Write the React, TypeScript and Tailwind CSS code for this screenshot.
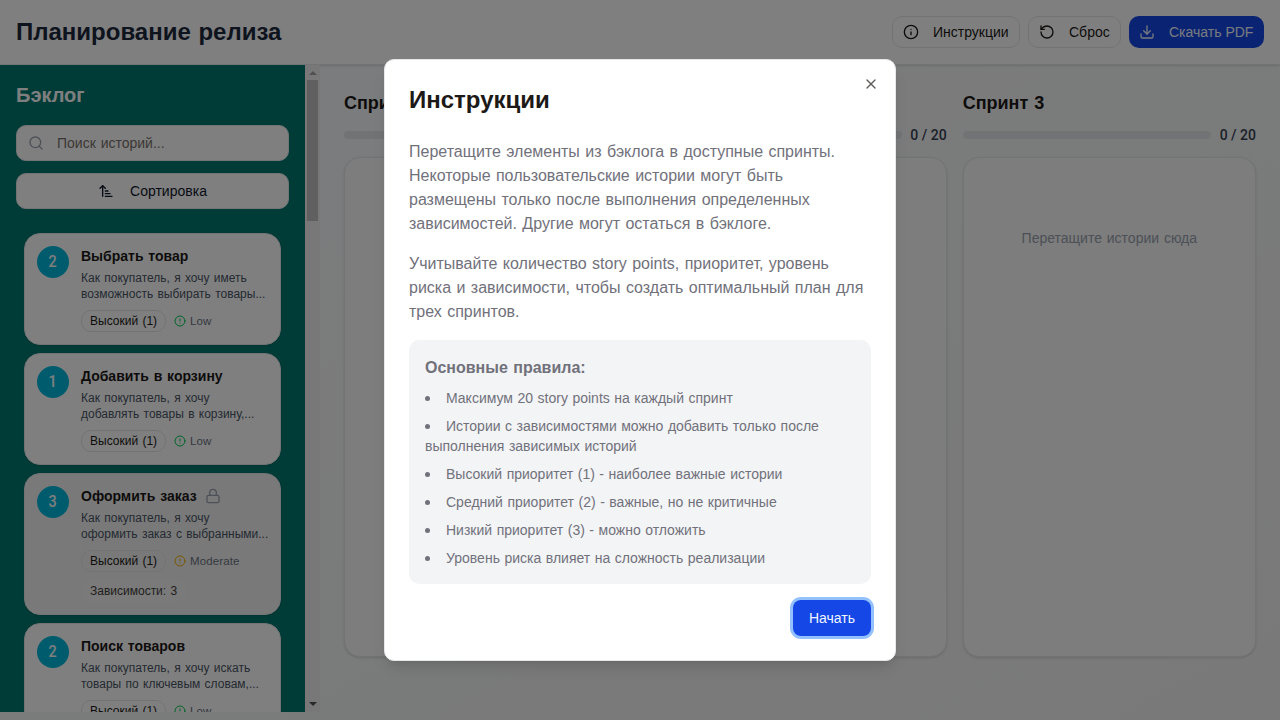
import React from "react";
import { ArrowUpNarrowWide, CircleAlert, Download, Info, Lock, RotateCcw, Search, X } from "lucide-react";

type Story = {
  points: number;
  title: string;
  lines: [string, string];
  risk: "Low" | "Moderate";
  dependency?: number;
};

const stories: Story[] = [
  { points: 2, title: "Выбрать товар", lines: ["Как покупатель, я хочу иметь", "возможность выбирать товары..."], risk: "Low" },
  { points: 1, title: "Добавить в корзину", lines: ["Как покупатель, я хочу", "добавлять товары в корзину,..."], risk: "Low" },
  { points: 3, title: "Оформить заказ", lines: ["Как покупатель, я хочу", "оформить заказ с выбранными..."], risk: "Moderate", dependency: 3 },
  { points: 2, title: "Поиск товаров", lines: ["Как покупатель, я хочу искать", "товары по ключевым словам,..."], risk: "Low" },
];

const rules = [
  "Максимум 20 story points на каждый спринт",
  "Истории с зависимостями можно добавить только после выполнения зависимых историй",
  "Высокий приоритет (1) - наиболее важные истории",
  "Средний приоритет (2) - важные, но не критичные",
  "Низкий приоритет (3) - можно отложить",
  "Уровень риска влияет на сложность реализации",
];

function StoryCard({ story }: { story: Story }) {
  const locked = story.dependency !== undefined;
  return (
    <article className={`flex shrink-0 gap-3 rounded-2xl border border-gray-200 p-3 shadow-sm ${locked ? "bg-[#f3f3f3]" : "bg-white"}`}>
      <div className="flex size-8 shrink-0 items-center justify-center rounded-full bg-[#00b8db] font-['Roboto',sans-serif] text-base font-medium text-white"><span className="inline-block scale-x-90">{story.points}</span></div>
      <div className="min-w-0 flex-1">
        <h3 className="flex h-5 items-center gap-2 text-sm leading-5 font-semibold whitespace-nowrap text-[#1c1917]">
          {story.title}
          {locked && <Lock className="size-4 text-gray-400" />}
        </h3>
        <p className="mt-1 text-xs leading-4 whitespace-nowrap text-[#4a5565]">
          {story.lines[0]}
          <br />
          {story.lines[1]}
        </p>
        <div className="mt-2 flex items-center gap-2 text-xs leading-4">
          <span className="rounded-[10px] border border-gray-200 px-2 py-0.5 text-[#1c1917]">Высокий (1)</span>
          <span className="flex items-center gap-1 text-[11.5px] tracking-[0.01em] text-[#6a7282]">
            <CircleAlert className={`size-3 ${story.risk === "Low" ? "text-green-500" : "text-[#f0b100]"}`} />
            {story.risk}
          </span>
        </div>
        {locked && <span className="mt-2 inline-block rounded-[10px] border border-transparent bg-[#f5f5f5] px-2 py-0.5 text-xs text-[#44403b]">Зависимости: {story.dependency}</span>}
      </div>
    </article>
  );
}

function Sprint({ number }: { number: number }) {
  return (
    <section className="min-w-0 flex-1">
      <h2 className="text-lg leading-7 font-semibold text-[#1c1917]">Спринт {number}</h2>
      <div className="mt-2 flex h-5 items-center gap-2">
        <div className="h-2 flex-1 rounded-full bg-[#e5e7eb]" />
        <span className="w-[37px] text-right font-['Roboto',sans-serif] text-sm font-medium whitespace-nowrap text-[#364153] [word-spacing:0]">0 / 20</span>
      </div>
      <div className={`mt-3 h-[500px] rounded-2xl border border-[#e5e7eb] pt-[70px] text-center text-sm text-[#99a1af] shadow-sm ${number === 3 ? "bg-[#f9faf9]" : "bg-[#f8fbf9]"}`}>Перетащите истории сюда</div>
    </section>
  );
}

export default function App() {
  return (
    <div className="relative h-[720px] w-[1280px] overflow-hidden bg-gradient-to-br from-[#f8fafc] to-[#f3f3f3] font-['Liberation_Sans',Arial,sans-serif] [word-spacing:0.06em]">
      <header className="flex h-[65px] items-center justify-between border-b border-gray-200 bg-white px-4 shadow-sm">
        <h1 className="text-2xl leading-8 font-bold text-[#1d293d]">Планирование релиза</h1>
        <div className="flex h-8 gap-2 text-sm text-[#1c1917]">
          <button className="flex w-32 items-center gap-[14px] rounded-[10px] border border-gray-200 px-2.5"><Info className="size-4" />Инструкции</button>
          <button className="flex w-[93px] items-center gap-[14px] rounded-[10px] border border-gray-200 px-2.5"><RotateCcw className="size-4" />Сброс</button>
          <button className="flex w-[135px] items-center gap-[14px] rounded-[10px] bg-[#1447e6] px-2.5 whitespace-nowrap text-blue-50"><Download className="size-4" />Скачать PDF</button>
        </div>
      </header>
      <div className="flex h-[647px]">
        <aside className="relative flex w-[305px] shrink-0 flex-col overflow-hidden bg-[#00786f] p-4">
          <h2 className="text-xl leading-7 font-semibold text-white">Бэклог</h2>
          <div className="mt-4 flex h-9 shrink-0 items-center gap-[13px] rounded-[10px] border border-gray-200 bg-white px-[11px] text-sm text-[#79716b]"><Search className="size-4 text-gray-400" />Поиск историй...</div>
          <button className="mt-3 flex h-9 shrink-0 items-center justify-center gap-4 rounded-[10px] border border-gray-200 bg-white text-sm text-[#0f172b]"><ArrowUpNarrowWide className="size-4" />Сортировка</button>
          <div className="mt-6 flex flex-col gap-2 px-2">{stories.map((story) => <StoryCard key={story.title} story={story} />)}</div>
        </aside>
        <div className="flex w-[15px] shrink-0 flex-col items-center justify-between bg-[#f1f1f1] py-[5px]">
          <div className="flex flex-col items-center gap-[5px]">
            <svg width="8" height="5" viewBox="0 0 8 5"><path d="M0 5L4 1L8 5Z" fill="#a3a3a3" /></svg>
            <div className="h-[141px] w-[11px] bg-[#c1c1c1]" />
          </div>
          <svg width="8" height="5" viewBox="0 0 8 5"><path d="M0 0L4 4L8 0Z" fill="#505050" /></svg>
        </div>
        <main className="flex flex-1 gap-4 p-6">{[1, 2, 3].map((n) => <Sprint key={n} number={n} />)}</main>
      </div>
      <div className="absolute inset-0 flex items-center justify-center bg-black/50">
        <div role="dialog" className="relative flex h-[602px] w-[512px] flex-col rounded-[10px] border border-gray-200 bg-white p-6 text-[#71717b] shadow-lg">
          <button aria-label="Закрыть" className="absolute top-4 right-4 opacity-70"><X className="size-4 text-[#1c1917]" /></button>
          <h2 className="text-2xl leading-8 font-bold text-[#1c1917]">Инструкции</h2>
          <p className="mt-6 text-base leading-6">Перетащите элементы из бэклога в доступные спринты.<br />Некоторые пользовательские истории могут быть<br />размещены только после выполнения определенных<br />зависимостей. Другие могут остаться в бэклоге.</p>
          <p className="mt-4 text-base leading-6">Учитывайте количество story points, приоритет, уровень<br />риска и зависимости, чтобы создать оптимальный план для<br />трех спринтов.</p>
          <div className="mt-4 rounded-[10px] bg-[#f3f4f6] p-4">
            <h4 className="mb-2 text-base leading-6 font-semibold">Основные правила:</h4>
            <ul className="list-inside list-disc space-y-2 text-sm leading-5 [word-spacing:0.045em] marker:text-[15px]">{rules.map((rule) => <li key={rule}>{rule}</li>)}</ul>
          </div>
          <button className="mt-4 h-9 w-[78px] shrink-0 self-end rounded-[8px] bg-[#1447e6] text-sm text-blue-50 ring-3 ring-[#93c0ff]">Начать</button>
        </div>
      </div>
    </div>
  );
}
